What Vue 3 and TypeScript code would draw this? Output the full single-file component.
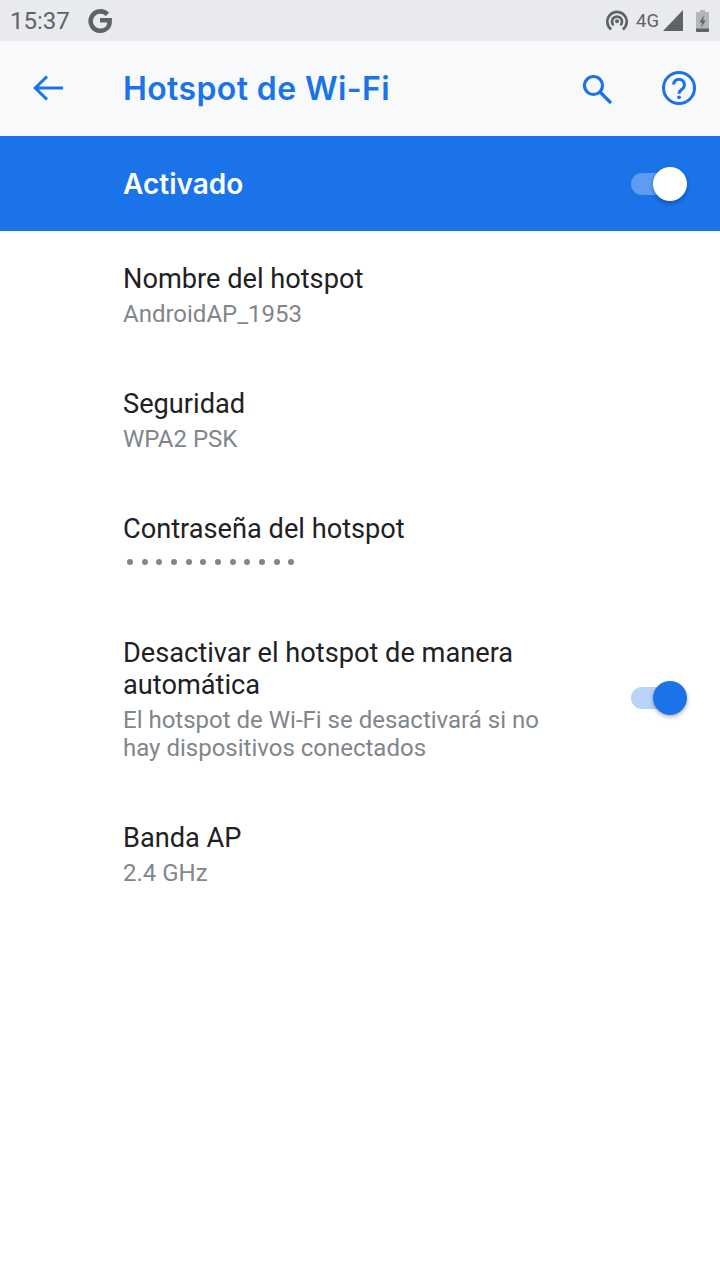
<script setup lang="ts">
interface Row { title: string; sub?: string; dots?: number; toggle?: boolean }
const rows: Row[] = [
  { title: 'Nombre del hotspot', sub: 'AndroidAP_1953' },
  { title: 'Seguridad', sub: 'WPA2 PSK' },
  { title: 'Contraseña del hotspot', dots: 12 },
  { title: 'Desactivar el hotspot de manera automática', sub: 'El hotspot de Wi-Fi se desactivará si no hay dispositivos conectados', toggle: true },
  { title: 'Banda AP', sub: '2.4 GHz' },
]
</script>

<template>
  <div class="screen">
    <header class="status">
      <span class="time">15:37</span>
      <svg class="ic-g" width="24" height="24" viewBox="0 0 24 24" fill="none" stroke="#5f6368" stroke-width="4.6">
        <path d="M19.4 5.4A9.7 9.7 0 1 0 12 21.8c5.6 0 9.6-3.8 9.6-9.4v-1.1H12" />
      </svg>
      <span class="spacer"></span>
      <svg class="ic-hot" width="22" height="22" viewBox="0 0 22 22" fill="none" stroke="#5f6368" stroke-width="2.7">
        <path d="M5.2 19.4a9.7 9.7 0 1 1 11.6 0" />
        <path d="M7.6 15.2a5 5 0 1 1 6.8 0" />
        <circle cx="11" cy="11.3" r="2" fill="#5f6368" stroke="none" />
      </svg>
      <span class="net">4G</span>
      <svg class="ic-sig" width="20" height="21" viewBox="0 0 20 21"><path d="M20 0V21H0z" fill="#5f6368" /></svg>
      <svg class="ic-bat" width="13" height="22" viewBox="0 0 13 22">
        <path d="M4 0h5v2h3a1 1 0 0 1 1 1v18a1 1 0 0 1-1 1H1a1 1 0 0 1-1-1V3a1 1 0 0 1 1-1h3z" fill="#b4b6ba" />
        <path d="M0 18.5h13V21a1 1 0 0 1-1 1H1a1 1 0 0 1-1-1z" fill="#5f6368" />
        <path d="M8 5 3.6 12.5h2.6L5 18 9.6 10.5H7z" fill="#5f6368" />
      </svg>
    </header>

    <nav class="toolbar">
      <button class="icon-btn back" aria-label="Atrás">
        <svg width="32" height="32" viewBox="0 0 32 32" fill="none" stroke="#1a73e8" stroke-width="3">
          <path d="M31 16H3M15 4.5 3.2 16 15 27.5" />
        </svg>
      </button>
      <h1 class="title">Hotspot de Wi-Fi</h1>
      <button class="icon-btn search" aria-label="Buscar">
        <svg width="34" height="34" viewBox="0 0 34 34" fill="none" stroke="#1a73e8" stroke-width="3.2">
          <circle cx="13.5" cy="13.5" r="9" />
          <path d="M20 20 31 31" />
        </svg>
      </button>
      <button class="icon-btn help" aria-label="Ayuda">
        <svg width="36" height="36" viewBox="0 0 36 36" fill="none" stroke="#1a73e8" stroke-width="3">
          <circle cx="18" cy="18" r="15.5" />
          <path d="M12.6 14.6a5.4 5.4 0 1 1 8.8 4.2c-2 1.6-3.4 2.4-3.4 5" />
          <circle cx="18" cy="27.3" r="1.9" fill="#1a73e8" stroke="none" />
        </svg>
      </button>
    </nav>

    <section class="master">
      <span class="master-label">Activado</span>
      <span class="switch on-blue"><i class="track"></i><i class="thumb"></i></span>
    </section>

    <main class="list">
      <div v-for="r in rows" :key="r.title" class="row">
        <div class="texts">
          <div class="row-title">{{ r.title }}</div>
          <div v-if="r.sub" class="row-sub">{{ r.sub }}</div>
          <div v-if="r.dots" class="dots"><i v-for="n in r.dots" :key="n" class="dot"></i></div>
        </div>
        <span v-if="r.toggle" class="switch row-switch"><i class="track"></i><i class="thumb"></i></span>
      </div>
    </main>
  </div>
</template>

<style>
html, body { margin: 0; background: #fff; }
</style>

<style scoped>
.screen {
  width: 720px;
  height: 1280px;
  background: #fff;
  font-family: Roboto, "Liberation Sans", sans-serif;
  overflow: hidden;
}
.status {
  height: 41px;
  background: #e8eaed;
  display: flex;
  align-items: center;
  padding: 0 11px 0 10px;
  box-sizing: border-box;
  color: #5f6368;
}
.time { font-size: 24px; }
.ic-g { margin-left: 18px; }
.spacer { flex: 1; }
.ic-hot { margin-right: 8px; }
.net { font-size: 18.5px; margin-right: 4px; }
.ic-bat { margin-left: 13px; }
.toolbar {
  height: 95px;
  background: #f8f9fa;
  display: flex;
  align-items: center;
  padding-left: 32px;
}
.icon-btn {
  border: 0;
  padding: 0;
  background: none;
  display: flex;
}
.back { margin-bottom: 1px; }
.title {
  margin: 0 0 1px 59px;
  flex: 1;
  font-family: Inter, Roboto, sans-serif;
  font-size: 32px;
  font-weight: 600;
  letter-spacing: 0.38px;
  color: #1a73e8;
}
.search { margin-right: 47px; }
.help { margin-right: 23px; margin-bottom: 1px; }
.master {
  height: 95px;
  background: #1a73e8;
  display: flex;
  align-items: center;
  justify-content: space-between;
  padding: 0 33px 0 123px;
}
.master-label { color: #fff; font-family: Inter, Roboto, sans-serif; font-size: 28px; font-weight: 600; }
.switch { position: relative; width: 56px; height: 34px; display: block; flex: none; }
.track {
  position: absolute; left: 0; top: 6px;
  width: 48px; height: 22px; border-radius: 11px;
  background: #b9d3f8;
}
.thumb {
  position: absolute; right: 0; top: 0;
  width: 34px; height: 34px; border-radius: 50%;
  background: #1a73e8;
  box-shadow: 0 2px 4px rgba(0, 0, 0, 0.3);
}
.on-blue .track { background: #5f9bf0; }
.on-blue .thumb { background: #fff; }
.list { padding-top: 15px; }
.row {
  display: flex;
  align-items: center;
  padding: 17px 33px 43px 123px;
}
.texts { width: 440px; flex: none; }
.row-switch { margin-left: auto; margin-bottom: 3px; }
.row-title { font-size: 27.2px; line-height: 32px; color: #202124; }
.row-sub { font-size: 24px; line-height: 28px; color: #80868b; margin-top: 5px; }
.dots { display: flex; gap: 8.67px; height: 24px; align-items: center; margin: 5px 0 3px; padding-left: 4px; }
.dot { width: 6px; height: 6px; border-radius: 50%; background: #80868b; }
</style>
